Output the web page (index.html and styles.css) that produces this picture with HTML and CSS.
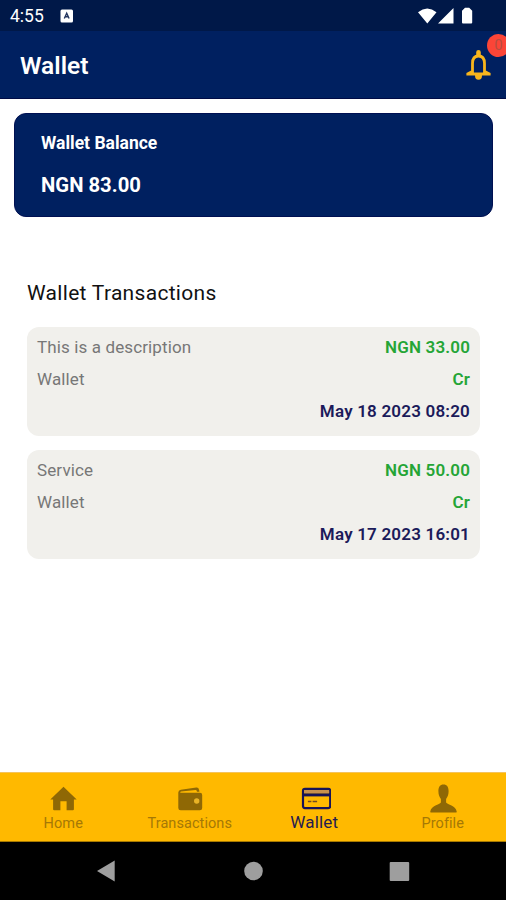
FILE: index.html
```html
<!DOCTYPE html>
<html lang="en">
<head>
<meta charset="utf-8">
<title>Wallet</title>
<link rel="stylesheet" href="styles.css">
</head>
<body>
<div class="screen">
  <div class="status">
    <span class="clock">4:55</span>
    <svg class="app-mark" width="14" height="14" viewBox="0 0 14 14"><rect x=".5" y=".5" width="12.5" height="13" rx="1.5" fill="#fff"/><path d="M4.3 9.5 6.7 4.2l2.4 5.3M5.3 7.8h2.8" fill="none" stroke="#23355f" stroke-width="1.4"/></svg>
    <svg class="signals" width="57" height="18" viewBox="0 0 57 18"><path d="M0 5.2Q9.300-2.200 18.500 5.200L9.300 16.500Z M20 16.500 35.500 1v15.500Z M44 3.800 47 .8h4.200l3 3v11.700q0 1-1 1H45q-1 0-1-1Z" fill="#fff"/></svg>
  </div>
  <header class="appbar">
    <h1>Wallet</h1>
    <div class="alerts">
      <svg width="26" height="32" viewBox="0 0 26 32"><path d="M7.500 25V14.500C7.500 9.800 9.500 7 13.500 7s6 2.800 6 7.500V25" fill="none" stroke="#f8b51c" stroke-width="2.800"/><path d="M1.400 26.400v-2.400L6.200 21.500 8.800 23.600h9.400l2.600-2.100 4.800 2.500v2.400ZM11.200 6.500V3.200q0-2.200 2.300-2.200t2.300 2.200v3.300ZM10 26.400h7q0 4.400-3.500 4.400T10 26.400Z" fill="#f8b51c"/></svg>
      <span class="badge">0</span>
    </div>
  </header>
  <main>
    <section class="balance">
      <div class="balance-label">Wallet Balance</div>
      <div class="balance-value">NGN 83.00</div>
    </section>
    <h2>Wallet Transactions</h2>
    <div class="list">
      <article class="entry">
        <div class="row"><span>This is a description</span><b>NGN 33.00</b></div>
        <div class="row"><span>Wallet</span><b>Cr</b></div>
        <time>May 18 2023 08:20</time>
      </article>
      <article class="entry">
        <div class="row"><span>Service</span><b>NGN 50.00</b></div>
        <div class="row"><span>Wallet</span><b>Cr</b></div>
        <time>May 17 2023 16:01</time>
      </article>
    </div>
  </main>
  <nav class="tabs">
    <div class="tab">
      <svg width="28" height="30" viewBox="0 0 28 30"><path d="M14.500 2.700 1.300 15.600h2.800v9.600q0 1 1 1h6.300v-9h6.200v9h6.300q1 0 1-1v-9.600h2.800Z" fill="#8f6805"/></svg>
      <span>Home</span>
    </div>
    <div class="tab">
      <svg width="28" height="30" viewBox="0 0 28 30"><path d="M4.3 8.7H24q2.2 0 2.2 2.2v13q0 2.4-2.4 2.4H4.7q-2.4 0-2.4-2.4V8.5q0-2.2 2.5-2.7L20.3 3.6q2.3-.3 2.8 2.4l.3 1.8H21l-.4-1.300q-.2-.7-1-.6L5 7.600q-1 .2-.7 1.100Z" fill="#8f6805"/><circle cx="20.7" cy="17" r="2.7" fill="#e9b326"/></svg>
      <span>Transactions</span>
    </div>
    <div class="tab active">
      <svg width="30" height="30" viewBox="0 0 30 30"><g transform="translate(.6 -.3)"><rect x="1.400" y="5.200" width="27.200" height="19.200" rx="2" fill="none" stroke="#181457" stroke-width="2.200"/><path d="M2.500 6.300h25v3.200h-25Z" fill="#c9914c"/><path d="M1.500 11.200h27" stroke="#181457" stroke-width="3"/><path d="M6.300 17.900h3.500m1.200 0h4.500" stroke="#6f4a24" stroke-width="1.500"/></g></svg>
      <span>Wallet</span>
    </div>
    <div class="tab">
      <svg width="28" height="30" viewBox="0 0 28 30"><path d="M14.500.4c-3.500 0-5.100 2.700-5.100 6.600 0 3.600.9 6 2.500 7.900v3.600c-1.500 2.500-9.300 2.500-10.600 9-.1.700.1 1.100.9 1.100h24.600c.8 0 1-.4.9-1.100-1.300-6.500-9.100-6.500-10.600-9v-3.600c1.600-1.900 2.500-4.300 2.500-7.900 0-3.900-1.600-6.600-5.100-6.600Z" fill="#8f6805"/></svg>
      <span>Profile</span>
    </div>
  </nav>
  <div class="sysnav">
    <svg width="506" height="58" viewBox="0 0 506 58"><path d="M97 29 114.700 18.500v21Z" fill="#9e9e9e"/><circle cx="253.500" cy="29" r="9.300" fill="#9e9e9e"/><rect x="389.700" y="20" width="19.500" height="19" rx="1" fill="#9e9e9e"/></svg>
  </div>
</div>
</body>
</html>
```
FILE: styles.css
```css
* { box-sizing: border-box; }
body { margin: 0; font-family: Roboto, "Liberation Sans", sans-serif; background: #fff; }
.screen { width: 506px; height: 900px; display: flex; flex-direction: column; overflow: hidden; }
.status { height: 31px; flex: none; background: #001848; display: flex; align-items: center; padding: 0 31px 0 10px; }
.clock { color: #fff; font-size: 17.5px; line-height: 20px; }
.app-mark { margin-left: 16px; }
.signals { margin-left: auto; }
.appbar { height: 68px; flex: none; background: #002060; border-bottom: 1px solid #000b45; display: flex; align-items: center; justify-content: space-between; padding: 0 15px 0 20px; }
h1 { margin: 2px 0 0; color: #fff; font-size: 24.5px; line-height: 30px; font-weight: 600; }
.alerts { position: relative; width: 26px; height: 32px; }
.alerts svg { display: block; }
.badge { position: absolute; left: 22px; top: -15px; width: 23px; height: 23px; border-radius: 50%; background: #fb4537; color: #b84d40; font-size: 15px; line-height: 23px; text-align: center; }
main { flex: 1; min-height: 0; padding: 14px 13px 0 14px; }
.balance { height: 104px; background: #002060; border: 1px solid #001052; border-radius: 12px; padding: 17px 26px; color: #fff; font-weight: 700; }
.balance-label { font-size: 17.5px; line-height: 24px; }
.balance-value { font-size: 20.3px; line-height: 28px; margin-top: 16px; }
h2 { margin: 62px 0 0 13px; font-size: 21px; line-height: 28px; font-weight: 400; color: #111; letter-spacing: .3px; }
.list { margin: 20px 13px 0; display: flex; flex-direction: column; gap: 14px; }
.entry { height: 109px; background: #f1f0ec; border-radius: 12px; padding: 4px 10px 0 10px; font-size: 17px; line-height: 32px; color: #777; letter-spacing: .12px; }
.row { display: flex; justify-content: space-between; }
.row b { color: #25a536; font-weight: 600; letter-spacing: .15px; }
time { display: block; text-align: right; color: #1b1a5a; font-weight: 600; letter-spacing: .2px; }
.tabs { height: 70px; flex: none; background: #ffb900; border-top: 1px solid #f5c35c; border-bottom: 1px solid #a77900; display: grid; grid-template-columns: repeat(4, 1fr); padding-top: 11px; }
.tab { display: flex; flex-direction: column; align-items: center; color: #a57806; font-size: 14.5px; line-height: 20px; letter-spacing: .07px; }
.tab svg { display: block; }
.tab.active { color: #251b51; font-size: 17px; line-height: 17px; letter-spacing: .15px; }
.tab.active span { margin-right: 4px; }
.sysnav { height: 58px; flex: none; background: #000; }
.sysnav svg { display: block; }
```
